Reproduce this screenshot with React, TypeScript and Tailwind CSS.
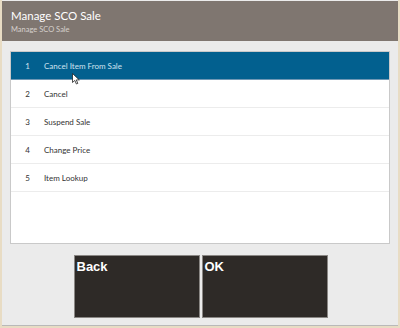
import React from "react";

const items = [
  { n: 1, label: "Cancel Item From Sale" },
  { n: 2, label: "Cancel" },
  { n: 3, label: "Suspend Sale" },
  { n: 4, label: "Change Price" },
  { n: 5, label: "Item Lookup" },
];

function Cursor() {
  return (
    <svg
      className="absolute left-[72px] top-[73px]"
      width="8"
      height="12"
      viewBox="0 0 8 12"
    >
      <path d="M0.5 0.5 L0.5 9.5 L2.8 7.4 L4.4 11 L5.8 10.4 L4.3 6.9 L7.3 6.9 Z" fill="#fff" stroke="#222" strokeWidth="0.8" />
    </svg>
  );
}

export default function App() {
  const selected = 1;
  return (
    <div
      className="relative w-[400px] h-[328px] bg-[#e8dcc4] px-[2px] pb-[2px] flex flex-col overflow-hidden"
      style={{ fontFamily: 'Lato, "Open Sans", sans-serif' }}
    >
      <div className="flex-1 flex flex-col bg-[#ebebeb] border-b border-[#b9b9b9]">
        {/* Header */}
        <div className="h-[40px] mt-[1px] bg-[#7f7670] px-[9px] pt-[8px] flex flex-col">
          <span className="text-[11.5px] leading-[14px] text-white">Manage SCO Sale</span>
          <span className="text-[7.5px] leading-[12px] text-[#d6d1cd] mt-[1px]">Manage SCO Sale</span>
        </div>

        {/* List panel */}
        <div className="mx-[8px] mt-[10px] h-[193px] bg-white border border-[#c9c9c9] flex flex-col">
          {items.map((it) => {
            const active = it.n === selected;
            return (
              <div
                key={it.n}
                className={`h-[28px] flex items-center border-b ${
                  active
                    ? "bg-[#02608f] border-[#6f98b5] text-[#cfe3ef]"
                    : "bg-white border-[#ececec] text-[#333]"
                } text-[8px]`}
              >
                <span className="w-[33px] text-center">{it.n}</span>
                <span>{it.label}</span>
              </div>
            );
          })}
        </div>

        {/* Buttons */}
        <div className="flex justify-center gap-[2px] mt-[11px] ml-[1px]">
          <button className="w-[126px] h-[63px] bg-[#2e2a27] border border-[#8a8784] text-left flex items-start px-[2px] pt-[3px]">
            <span
              className="text-white text-[13px] font-bold leading-[16px]"
              style={{ fontFamily: '"Liberation Sans", Arial, sans-serif' }}
            >
              Back
            </span>
          </button>
          <button className="w-[126px] h-[63px] bg-[#2e2a27] border border-[#8a8784] text-left flex items-start px-[2px] pt-[3px]">
            <span
              className="text-white text-[13px] font-bold leading-[16px]"
              style={{ fontFamily: '"Liberation Sans", Arial, sans-serif' }}
            >
              OK
            </span>
          </button>
        </div>
      </div>
      <Cursor />
    </div>
  );
}
